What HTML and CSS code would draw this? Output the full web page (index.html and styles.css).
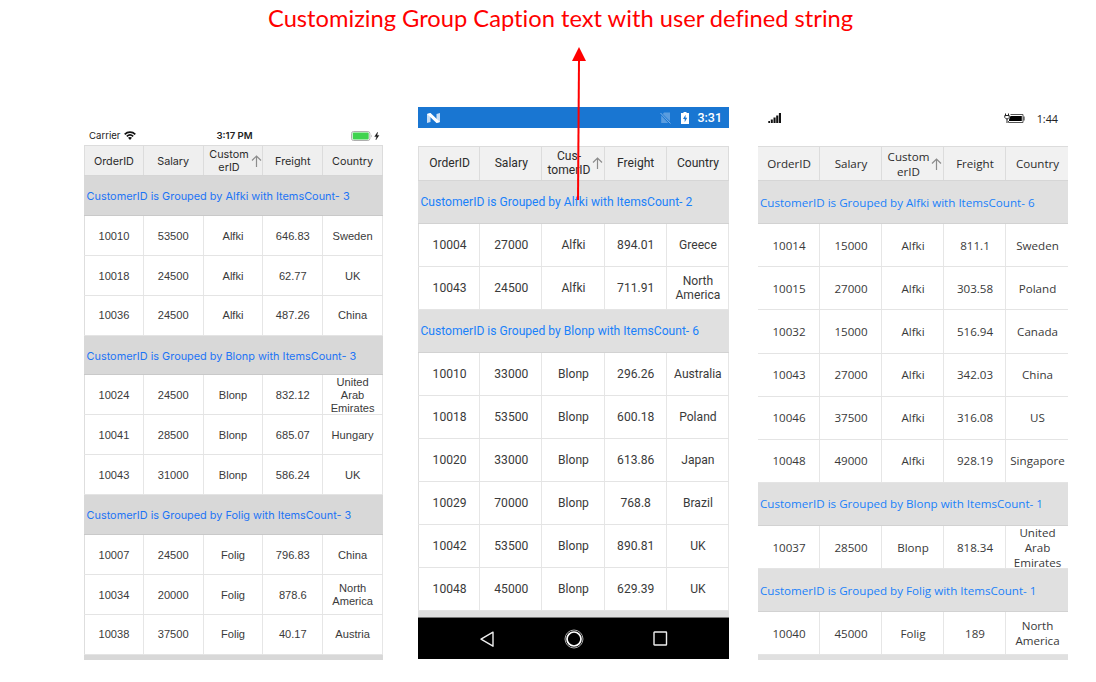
FILE: index.html
```html
<!DOCTYPE html>
<html lang="en">
<head>
<meta charset="utf-8">
<title>Group caption customization</title>
<link rel="stylesheet" href="styles.css">
</head>
<body>
<h1 class="title"><span>Customizing Group Caption text with user defined string</span></h1>
<main class="phones">
  <section class="phone ios">
    <div class="status">
      <span class="carrier">Carrier</span>
      <svg class="wifi" width="12" height="9" viewBox="0 0 12 9"><g fill="none" stroke="#111" stroke-width="1.7"><path d="M.7 3.3C3.7.3 8.3.3 11.3 3.3"/><path d="M2.8 5.4c1.9-1.8 4.500-1.800 6.400 0"/></g><path d="M4 6.700c1.200-1 2.800-1 4 0L6 8.900z" fill="#111"/></svg>
      <span class="clock">3:17 PM</span>
      <svg class="battery" width="29" height="10" viewBox="0 0 29 10"><rect x=".5" y=".5" width="18.4" height="9" rx="2" fill="#fff" stroke="#999" stroke-width=".8"/><rect x="1.7" y="1.600" width="16" height="6.800" rx=".8" fill="#3fd34f"/><path d="M20 3.500q1.400 1.500 0 3z" fill="#999"/><path d="M26.600 1.200L23.700 5.600h2l-.8 3.200 3-4.400h-2z" fill="#111" stroke="#111" stroke-width=".4"/></svg>
    </div>
    <div class="grid">
      <div class="row head"><span>OrderID</span><span>Salary</span><span class="sorted"><b>Custom<br>erID</b><svg class="sort" width="11" height="12" viewBox="0 0 11 12"><path d="M5.5 12V1M1 5.5L5.5 1 10 5.5"/></svg></span><span>Freight</span><span>Country</span></div>
      <div class="caption"><span>CustomerID is Grouped by Alfki with ItemsCount- 3</span></div>
      <div class="row"><span>10010</span><span>53500</span><span>Alfki</span><span>646.83</span><span>Sweden</span></div>
      <div class="row"><span>10018</span><span>24500</span><span>Alfki</span><span>62.77</span><span>UK</span></div>
      <div class="row"><span>10036</span><span>24500</span><span>Alfki</span><span>487.26</span><span>China</span></div>
      <div class="caption"><span>CustomerID is Grouped by Blonp with ItemsCount- 3</span></div>
      <div class="row"><span>10024</span><span>24500</span><span>Blonp</span><span>832.12</span><span>United<br>Arab<br>Emirates</span></div>
      <div class="row"><span>10041</span><span>28500</span><span>Blonp</span><span>685.07</span><span>Hungary</span></div>
      <div class="row"><span>10043</span><span>31000</span><span>Blonp</span><span>586.24</span><span>UK</span></div>
      <div class="caption"><span>CustomerID is Grouped by Folig with ItemsCount- 3</span></div>
      <div class="row"><span>10007</span><span>24500</span><span>Folig</span><span>796.83</span><span>China</span></div>
      <div class="row"><span>10034</span><span>20000</span><span>Folig</span><span>878.6</span><span>North<br>America</span></div>
      <div class="row"><span>10038</span><span>37500</span><span>Folig</span><span>40.17</span><span>Austria</span></div>
      <div class="rest"></div>
    </div>
  </section>

  <section class="phone android">
    <div class="status">
      <svg class="nougat" width="13" height="10" viewBox="0 0 13 10"><path d="M0 1l3.500-1v9L0 10zM9.500 1L13 0v9l-3.500 1z" fill="#c9def4"/><path d="M0 1l3.500-1L13 9 9.500 10z" fill="#fff"/></svg>
      <svg class="nosim" width="11" height="12" viewBox="0 0 11 12"><path d="M4 .5H10v8.800L2.800 2zM1.200 3.500l7 7.500h-7z" fill="#5b9ddf"/><path d="M.5 1L10.500 11.500" stroke="#7fb3e8"/></svg>
      <svg class="charge" width="8" height="12" viewBox="0 0 8 12"><path d="M0 1h2.500V0h3v1H8v11H0z" fill="#fff"/><path d="M4.600 2.700L2 7h1.700v3.200L6.200 5.800H4.500z" fill="#1976d2"/></svg>
      <span class="clock">3:31</span>
    </div>
    <div class="grid">
      <div class="row head"><span>OrderID</span><span>Salary</span><span class="sorted"><b>Cus-<br>tomerID</b><svg class="sort" width="11" height="12" viewBox="0 0 11 12"><path d="M5.500 12V1M1 5.500L5.500 1 10 5.500"/></svg></span><span>Freight</span><span>Country</span></div>
      <div class="caption"><span>CustomerID is Grouped by Alfki with ItemsCount- 2</span></div>
      <div class="row"><span>10004</span><span>27000</span><span>Alfki</span><span>894.01</span><span>Greece</span></div>
      <div class="row"><span>10043</span><span>24500</span><span>Alfki</span><span>711.91</span><span>North<br>America</span></div>
      <div class="caption"><span>CustomerID is Grouped by Blonp with ItemsCount- 6</span></div>
      <div class="row"><span>10010</span><span>33000</span><span>Blonp</span><span>296.26</span><span>Australia</span></div>
      <div class="row"><span>10018</span><span>53500</span><span>Blonp</span><span>600.18</span><span>Poland</span></div>
      <div class="row"><span>10020</span><span>33000</span><span>Blonp</span><span>613.86</span><span>Japan</span></div>
      <div class="row"><span>10029</span><span>70000</span><span>Blonp</span><span>768.8</span><span>Brazil</span></div>
      <div class="row"><span>10042</span><span>53500</span><span>Blonp</span><span>890.81</span><span>UK</span></div>
      <div class="row"><span>10048</span><span>45000</span><span>Blonp</span><span>629.39</span><span>UK</span></div>
      <div class="rest"></div>
    </div>
    <div class="nav">
      <svg width="16" height="18" viewBox="0 0 16 18"><path d="M14 2.200v14L2 9.200z" fill="none" stroke="#eee" stroke-width="1.400" stroke-linejoin="round"/></svg>
      <svg width="20" height="20" viewBox="0 0 20 20"><circle cx="10" cy="10" r="9" fill="none" stroke="#aaa"/><circle cx="10" cy="10" r="7" fill="none" stroke="#fff" stroke-width="1.700"/></svg>
      <svg width="15" height="15" viewBox="0 0 15 15"><rect x="1" y="1" width="12.500" height="13" rx=".5" fill="none" stroke="#eee" stroke-width="1.400"/></svg>
    </div>
  </section>

  <section class="phone windows">
    <div class="status">
      <svg class="signal" width="14" height="11" viewBox="0 0 14 11"><path d="M.3 8h1.700v2H.3zM2.800 6.500h2V10h-2zM5.500 4.500h2.100V10H5.500zM8.200 2.500h2.100V10H8.200zM10.900 0H13v10h-2.100z" fill="#111"/></svg>
      <svg class="battery" width="21" height="11" viewBox="0 0 21 11"><path d="M1.500.5v2M4.500.5v2M.8 2.500h4.400v2q-1 1.500-2.200 1.500T.8 4.500zM3 6v4" fill="none" stroke="#222"/><path d="M6.500 1.500H19v8H4.500V8" fill="none" stroke="#555"/><path d="M6.500 3H17.800v5H5V6.500z" fill="#000"/><path d="M19.500 3.500h1v4h-1z" fill="#222"/></svg>
      <span class="clock">1:44</span>
    </div>
    <div class="grid">
      <div class="row head"><span>OrderID</span><span>Salary</span><span class="sorted"><b>Custom<br>erID</b><svg class="sort" width="11" height="12" viewBox="0 0 11 12"><path d="M5.500 12V1M1 5.500L5.500 1 10 5.500"/></svg></span><span>Freight</span><span>Country</span></div>
      <div class="caption"><span>CustomerID is Grouped by Alfki with ItemsCount- 6</span></div>
      <div class="row"><span>10014</span><span>15000</span><span>Alfki</span><span>811.1</span><span>Sweden</span></div>
      <div class="row"><span>10015</span><span>27000</span><span>Alfki</span><span>303.58</span><span>Poland</span></div>
      <div class="row"><span>10032</span><span>15000</span><span>Alfki</span><span>516.94</span><span>Canada</span></div>
      <div class="row"><span>10043</span><span>27000</span><span>Alfki</span><span>342.03</span><span>China</span></div>
      <div class="row"><span>10046</span><span>37500</span><span>Alfki</span><span>316.08</span><span>US</span></div>
      <div class="row"><span>10048</span><span>49000</span><span>Alfki</span><span>928.19</span><span>Singapore</span></div>
      <div class="caption"><span>CustomerID is Grouped by Blonp with ItemsCount- 1</span></div>
      <div class="row"><span>10037</span><span>28500</span><span>Blonp</span><span>818.34</span><span>United<br>Arab<br>Emirates</span></div>
      <div class="caption"><span>CustomerID is Grouped by Folig with ItemsCount- 1</span></div>
      <div class="row"><span>10040</span><span>45000</span><span>Folig</span><span>189</span><span>North<br>America</span></div>
      <div class="rest"></div>
    </div>
  </section>
</main>
<svg class="pointer" width="20" height="156" viewBox="0 0 20 156"><path d="M10 12L9 153" stroke="#f00" stroke-width="2"/><path d="M10 0l7 14H3z" fill="#f00"/></svg>
</body>
</html>
```
FILE: styles.css
```css
* { box-sizing: border-box; }
body { margin: 0; width: 1096px; height: 682px; overflow: hidden; position: relative; background: #fff; display: flex; flex-direction: column; }
.title { margin: 0; height: 107px; padding: 3px 0 0 268px; font: 400 23.7px/30px Lato, sans-serif; color: #f00; white-space: nowrap; font-variant-ligatures: none; }
.phones { display: flex; height: 553px; padding-left: 84px; }
.phone { display: flex; flex-direction: column; color: #3a3a3a; }
.status { display: flex; align-items: center; flex: none; }
.grid { flex: 1; min-height: 0; display: flex; flex-direction: column; overflow: hidden; }
.row { display: grid; grid-template-columns: repeat(5, 1fr); height: var(--row); flex: none; border-bottom: 1px solid #e4e4e4; }
.row > span { display: flex; align-items: center; justify-content: center; text-align: center; border-right: 1px solid #e6e6e6; white-space: nowrap; min-width: 0; min-height: 0; }
.head { height: var(--head); background: #f1f1f1; border-top: 1px solid #dcdcdc; border-bottom-color: #d6d6d6; color: #2c2c2c; }
.head > span { border-right-color: #dcdcdc; }
.sorted { position: relative; }
.sorted b { font-weight: 400; }
.sort { position: absolute; fill: none; stroke: #8c8c8c; stroke-width: 1.2; }
.caption { height: var(--row); flex: none; display: flex; align-items: center; color: #1a80fa; white-space: nowrap; border-bottom: 1px solid #d2d2d2; background: #e0e0e0; }
.rest { flex: 1; background: #e0e0e0; }

.ios { width: 299px; --row: 39.88px; --head: 31.5px; font: 11.1px/13px "Liberation Sans", sans-serif; }
.ios .status { height: 37.600px; padding: 20px 0 0 5px; font: 9.6px/12px Inter, sans-serif; color: #222; }
.ios .wifi { margin-left: 4px; }
.ios .clock { margin-left: 80px; font-weight: 600; }
.ios .status .battery { margin-left: auto; margin-right: 3px; }
.ios .row > span { padding-top: 1.6px; }
.ios .row > span:first-child { border-left: 1px solid #dedede; }
.ios .head { font-family: Inter, sans-serif; font-size: 10.8px; background: #efefef; }
.ios .sorted { padding-right: 8px; }
.ios .sort { right: 0; top: 9px; }
.ios .caption { background: #d8d8d8; border-color: #c9c9c9; padding: 1px 0 0 2.500px; font: 10.9px/14px Inter, sans-serif; color: #1d74f5; }
.ios .rest { background: #d8d8d8; }

.android { width: 311px; margin-left: 35px; height: 552px; --row: 43.07px; --head: 34.500px; font: 12.1px/14px Roboto, sans-serif; }
.android .status { height: 21px; margin-bottom: 18px; background: #1976d2; color: #fff; padding: 0 7px 0 9px; font-size: 12.5px; font-weight: 500; }
.android .nosim { margin-left: auto; margin-right: 10px; }
.android .charge { margin-right: 8px; }
.android .row > span { padding-left: 1px; }
.android .row > span:first-child { border-left: 1px solid #dedede; }
.android .sorted { padding-right: 9px; }
.android .sort { right: 1px; top: 10px; }
.android .caption { padding-left: 2.5px; }
.android .nav { height: 42px; flex: none; background: #000; border-top: 1px solid #777; display: flex; align-items: center; padding-left: 61px; }
.android .nav svg:nth-child(2) { margin-left: 68.500px; }
.android .nav svg:nth-child(3) { margin-left: 69px; }

.windows { width: 310px; margin-left: 29px; --row: 43.12px; --head: 35px; font: 11.6px/15px "Open Sans", sans-serif; }
.windows .status { height: 23px; margin-bottom: 16.100px; padding: 0 10px 0 10px; font-size: 10.8px; color: #222; }
.windows .status .battery { margin-left: auto; margin-right: 12px; }
.windows .row > span { padding-left: 1px; }
.windows .row > span:last-child { border-right: 0; }
.windows .sorted { padding-right: 9px; }
.windows .sort { right: 1px; top: 11px; }
.windows .caption { padding-left: 2px; }

.pointer { position: absolute; left: 569px; top: 47px; }
```
